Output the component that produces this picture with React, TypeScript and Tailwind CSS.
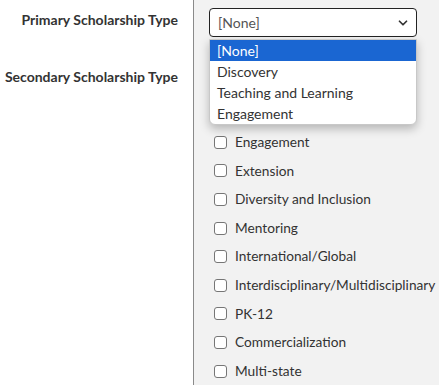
import { ChevronDown } from "lucide-react";

const OPTIONS = ["[None]", "Discovery", "Teaching and Learning", "Engagement"];

const AREAS = [
  "Engagement",
  "Extension",
  "Diversity and Inclusion",
  "Mentoring",
  "International/Global",
  "Interdisciplinary/Multidisciplinary",
  "PK-12",
  "Commercialization",
  "Multi-state",
];

export default function App() {
  return (
    <div className="flex h-[385px] w-[439px] overflow-hidden text-[14px] text-[#333]" style={{ fontFamily: "Lato, 'Open Sans', sans-serif" }}>
      {/* labels column */}
      <div className="w-[194px] shrink-0 border-r border-[#8a8a8a] bg-white pr-[15px] text-right font-bold text-[#333]">
        <div className="pt-[11px] leading-[18px]">Primary Scholarship Type</div>
        <div className="pt-[39px] leading-[18px]">Secondary Scholarship Type</div>
      </div>

      {/* inputs column */}
      <div className="relative flex-1 bg-[#f2f2f2] pl-[15px] pt-[8px]">
        <div className="flex h-[29px] w-[208px] items-center justify-between rounded-[4px] border border-[#222] bg-white pl-[8px] pr-[6px] text-[#555]">
          <span>[None]</span>
          <ChevronDown className="h-[14px] w-[14px] text-[#333]" strokeWidth={3} />
        </div>

        {/* open dropdown list */}
        <div className="absolute left-[15px] top-[39px] z-10 w-[208px] overflow-hidden rounded-b-[6px] border border-[#c8c8c8] bg-white shadow-[0_4px_10px_rgba(0,0,0,0.25)]">
          {OPTIONS.map((o, i) => (
            <div
              key={o}
              className={`h-[21px] px-[7px] leading-[21px] ${i === 0 ? "bg-[#1a66d2] text-white" : "text-[#333]"}`}
            >
              {o}
            </div>
          ))}
        </div>

        <div className="mt-[91px] flex flex-col text-[13.7px]">
          {AREAS.map((a) => (
            <label key={a} className="flex h-[28.6px] items-center gap-[8px] pl-[5px] text-[#333]">
              <span className="h-[13px] w-[13px] shrink-0 rounded-[3px] border border-[#767676] bg-white" />
              <span className="whitespace-nowrap">{a}</span>
            </label>
          ))}
        </div>
      </div>
    </div>
  );
}
